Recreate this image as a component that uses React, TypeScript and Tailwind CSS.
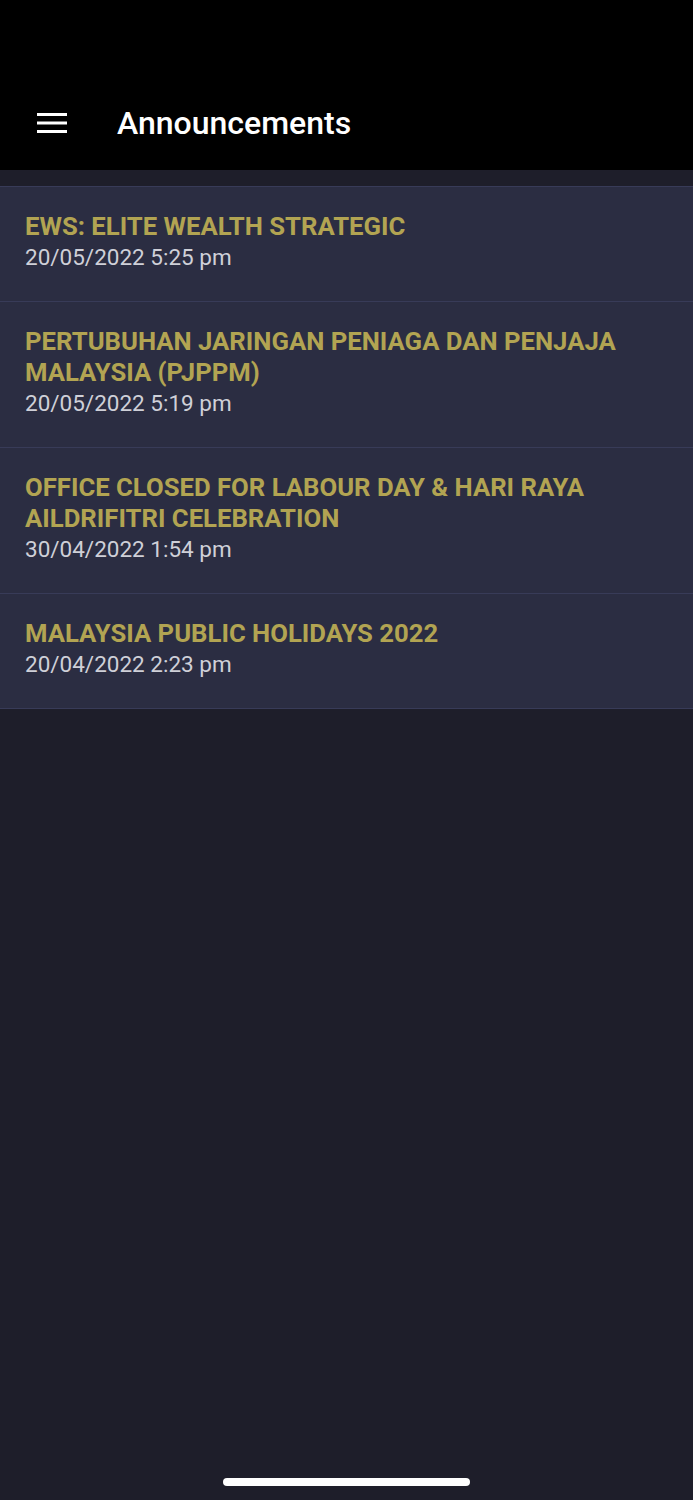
import React from "react";

const items = [
  { title: "EWS: ELITE WEALTH STRATEGIC", date: "20/05/2022 5:25 pm" },
  {
    title: "PERTUBUHAN JARINGAN PENIAGA DAN PENJAJA MALAYSIA (PJPPM)",
    date: "20/05/2022 5:19 pm",
  },
  {
    title: "OFFICE CLOSED FOR LABOUR DAY & HARI RAYA AILDRIFITRI CELEBRATION",
    date: "30/04/2022 1:54 pm",
  },
  { title: "MALAYSIA PUBLIC HOLIDAYS 2022", date: "20/04/2022 2:23 pm" },
];

const App = () => {
  return (
    <div className="relative w-[693px] h-[1500px] bg-[#1e1e2a] flex flex-col font-['Roboto',sans-serif] overflow-hidden">
      {/* Header */}
      <header className="h-[170px] bg-black flex items-end pb-[31px] shrink-0">
        <div className="flex items-center h-[32px]">
          <svg className="ml-[37px]" width="30" height="22" viewBox="0 0 30 22">
            <rect x="0" y="1" width="30" height="3" fill="#fff" />
            <rect x="0" y="9.5" width="30" height="3" fill="#fff" />
            <rect x="0" y="18" width="30" height="3" fill="#fff" />
          </svg>
          <h1 className="ml-[50px] text-white text-[32px] font-medium leading-none">
            Announcements
          </h1>
        </div>
      </header>

      {/* List */}
      <div className="mt-[16px] border-t border-[#383b58]">
        {items.map((item) => (
          <div
            key={item.title}
            className="bg-[#2b2d42] border-b border-[#383b58] pl-[25px] pr-[40px] pt-[24px] pb-[28px]"
          >
            <div className="text-[#b2a452] text-[25.7px] leading-[31px] font-bold">
              {item.title}
            </div>
            <div className="text-[#cfd0d8] text-[22.5px] leading-[31px]">
              {item.date}
            </div>
          </div>
        ))}
      </div>

      {/* Home indicator */}
      <div className="absolute bottom-[14px] left-[223px] w-[247px] h-[8px] rounded-full bg-white" />
    </div>
  );
};

export default App;
